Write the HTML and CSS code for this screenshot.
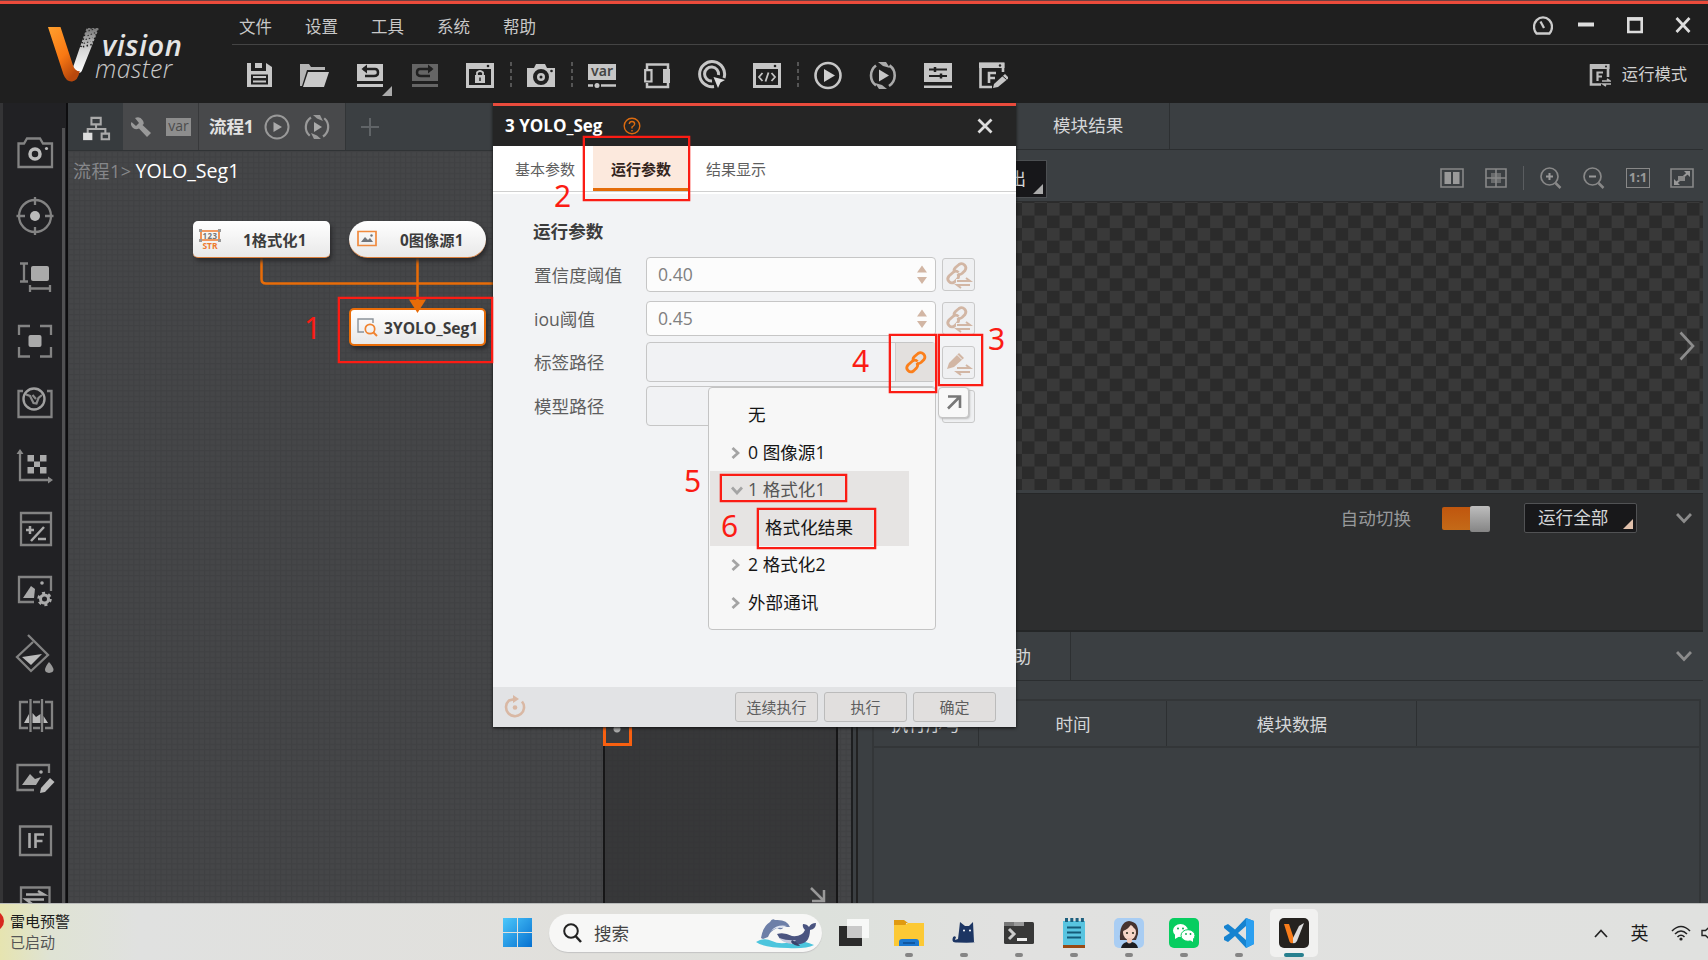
FILE: index.html
```html
<!DOCTYPE html>
<html lang="zh-CN">
<head>
<meta charset="utf-8">
<title>VisionMaster</title>
<link rel="stylesheet" href="styles.css">
</head>
<body>
<div class="screen">
<header class="top">
  <div class="brand">
    <svg class="brand-mark" viewBox="0 0 56 58">
      <defs>
        <linearGradient id="vo" x1="0" y1="0" x2="0.6" y2="1"><stop offset="0" stop-color="#ffa02e"/><stop offset="0.6" stop-color="#f97813"/><stop offset="1" stop-color="#b8480c"/></linearGradient>
        <linearGradient id="vg" x1="0" y1="0" x2="0" y2="1"><stop offset="0" stop-color="#777"/><stop offset="0.5" stop-color="#d8d8d8"/><stop offset="1" stop-color="#fff"/></linearGradient>
      </defs>
      <path d="M41 2 L54 2 L36 47 Q33 51 28 47 Q26 44 28 40Z" fill="url(#vg)"/>
      <path d="M41 2H54L47 19L35 22Z" fill="none" stroke="#1f1f1f" stroke-width="1.8" stroke-dasharray="1.5 2.5"/>
      <path d="M43 5L49 3M42 10L50 7M40 14L47 12M38 18L45 16" stroke="#333" stroke-width="1.2" stroke-dasharray="1.5 2"/>
      <path d="M1 1 H14 L27 41 Q29 47 34 47 Q32 57 26 57.500 Q20 58 17 50Z" fill="url(#vo)"/>
    </svg>
    <div class="brand-text"><b>vision</b><span>master</span></div>
  </div>
  <div class="top-main">
    <div class="menu-row">
      <nav class="menu"><span>文件</span><span>设置</span><span>工具</span><span>系统</span><span>帮助</span></nav>
      <div class="win-controls">
        <svg width="20" height="20" viewBox="0 0 20 20"><path d="M3.500 18.500A9 9.500 0 1 1 16.500 18.500Z" fill="none" stroke="#ccc" stroke-width="2.300"/><path d="M7.500 6.500L11 13" stroke="#ccc" stroke-width="2.300"/></svg>
        <svg width="16" height="20" viewBox="0 0 16 20"><path d="M0 9.500H16" stroke="#ddd" stroke-width="4"/></svg>
        <svg width="16" height="20" viewBox="0 0 16 20"><path d="M1.300 3.500H14.700V17H1.300Z" fill="none" stroke="#ddd" stroke-width="2.600"/><path d="M0 4H16" stroke="#ddd" stroke-width="3.500"/></svg>
        <svg width="16" height="20" viewBox="0 0 16 20"><path d="M1.500 3L14.500 17M14.500 3L1.500 17" stroke="#ddd" stroke-width="2.700"/></svg>
      </div>
    </div>
    <div class="tool-row">
      <div class="tools">
        <i><svg viewBox="0 0 30 30"><path d="M2 3H6V11H21V3L27 7V27H2Z" fill="#c6c6c6"/><path d="M10 3H17V8H10Z" fill="#c6c6c6"/><path d="M6 14.500H23V24.500H6Z" fill="#202020"/><path d="M8 17H21M8 21.500H21" stroke="#c6c6c6" stroke-width="2"/></svg></i>
        <i><svg viewBox="0 0 30 30"><path d="M0 4H9L11 7H25V10H7L2 26H0Z" fill="#b4b4b4"/><path d="M8 12H29L24 27H3Z" fill="#c9c9c9"/></svg></i>
        <i class="has-corner"><svg viewBox="0 0 30 30"><path d="M2 4H28V21H2Z M2 24H28V27H2Z" fill="#c6c6c6"/><path d="M8 9H20Q23 9 23 12.500T19 16H10" fill="none" stroke="#202020" stroke-width="2.500"/><path d="M12 4.500L6.500 9L12 13.500Z" fill="#202020"/></svg></i>
        <i><svg viewBox="0 0 30 30"><path d="M2 4H28V21H2Z M2 24H28V27H2Z" fill="#656565"/><path d="M22 9H10Q7 9 7 12.500T11 16H20" fill="none" stroke="#202020" stroke-width="2.500"/><path d="M18 4.500L23.500 9L18 13.500Z" fill="#202020"/></svg></i>
        <i><svg viewBox="0 0 30 30"><path d="M1 3H29V28H1Z" fill="#c6c6c6"/><path d="M4 9H26V25H4Z" fill="#202020"/><circle cx="23" cy="6" r="1.300" fill="#202020"/><path d="M10 15H20V23H10Z" fill="#c6c6c6"/><path d="M12 15V12.500Q15 9.500 18 12.500V15" fill="none" stroke="#c6c6c6" stroke-width="1.800"/><path d="M15 17.500V21" stroke="#202020" stroke-width="1.500"/></svg></i>
        <b class="dash"></b>
        <i><svg viewBox="0 0 30 30"><path d="M1 8H8L10 4H19L21 8H29V27H1Z" fill="#c6c6c6"/><circle cx="15" cy="17" r="6" fill="none" stroke="#202020" stroke-width="4"/><circle cx="15" cy="17" r="1.500" fill="#202020"/><circle cx="25.500" cy="11" r="1.300" fill="#202020"/></svg></i>
        <b class="dash"></b>
        <i><svg viewBox="0 0 30 30"><path d="M1 4H29V20H1Z" fill="#c6c6c6"/><path d="M1 25.500H6M14 25.500H29" stroke="#c6c6c6" stroke-width="2.500"/><circle cx="10" cy="25.500" r="2.500" fill="#c6c6c6"/><text x="15" y="16" text-anchor="middle" class="var-t">var</text></svg></i>
        <i><svg viewBox="0 0 30 30"><path d="M5 9V4.500H26V9M5 23V27H26V23" fill="none" stroke="#c6c6c6" stroke-width="2.500"/><path d="M3.200 10.200H9.500V21.500H3.200Z" fill="none" stroke="#c6c6c6" stroke-width="2.200"/><path d="M21 9H28V23H21Z" fill="#c6c6c6"/></svg></i>
        <i><svg viewBox="0 0 30 30"><path d="M17 26.500A12.500 12.500 0 1 1 27 18" fill="none" stroke="#c6c6c6" stroke-width="3"/><path d="M15 21A7 7 0 1 1 21.500 15" fill="none" stroke="#c6c6c6" stroke-width="3"/><path d="M16.500 17L28 20L23.500 22.500L21 28Z" fill="#ddd"/></svg></i>
        <i><svg viewBox="0 0 30 30"><path d="M1 3H29V28H1Z" fill="#c6c6c6"/><path d="M4 9H26V25H4Z" fill="#202020"/><circle cx="23" cy="6" r="1.300" fill="#202020"/><path d="M10.500 13L7 17L10.500 21M19.500 13L23 17L19.500 21M16.500 12.500L13.500 21.500" fill="none" stroke="#c6c6c6" stroke-width="1.800"/></svg></i>
        <b class="dash"></b>
        <i><svg viewBox="0 0 30 30"><circle cx="15" cy="15.500" r="12.500" fill="none" stroke="#c6c6c6" stroke-width="2.600"/><path d="M11 9L22 15.500L11 22Z" fill="#d0d0d0"/></svg></i>
        <i><svg viewBox="0 0 30 30"><path d="M8 5.500A12.500 12.500 0 0 0 8 25.500M21 26A12.500 12.500 0 0 0 21 5" fill="none" stroke="#aaa" stroke-width="2.600" stroke-dasharray="24 3 20"/><path d="M10 2H18L22 8L15 6Z M19 29H11L7 23L14 25Z" fill="#aaa"/><path d="M11 9.500L21 15.500L11 21.500Z" fill="#c6c6c6"/></svg></i>
        <i><svg viewBox="0 0 30 30"><path d="M1 3H29V22H1Z M1 25.500H29V28H1Z" fill="#c6c6c6"/><path d="M6 9.500H24M6 16H24" stroke="#202020" stroke-width="2"/><path d="M12 7V12M18 13.500V18.500" stroke="#202020" stroke-width="2.500"/></svg></i>
        <i><svg viewBox="0 0 30 30"><path d="M25 12V4H2.500V27H14" fill="none" stroke="#c6c6c6" stroke-width="2.600"/><path d="M1 2.500H26.500V8H1Z" fill="#c6c6c6"/><circle cx="22" cy="5.500" r="1.200" fill="#202020"/><path d="M11 23V13H18M11 18H17" fill="none" stroke="#c6c6c6" stroke-width="2.600"/><path d="M15 28L16 24L27 14L31 18L20 27Z" fill="#c6c6c6"/><path d="M24 15.500L28.500 19.500" stroke="#202020"/></svg></i>
      </div>
      <div class="run-mode">
        <svg width="22" height="24" viewBox="0 0 22 24"><path d="M19 14V2.500H2V21.500H12" fill="none" stroke="#bbb" stroke-width="2.600"/><path d="M1 1H20.500V6H1Z" fill="#bbb"/><circle cx="17" cy="3.500" r="1" fill="#222"/><path d="M8.500 18V9.500H14M8.500 13.500H13" fill="none" stroke="#bbb" stroke-width="2.200"/><path d="M13 18H21L18 16M22 21H14L17 23" fill="none" stroke="#bbb" stroke-width="1.600"/></svg>
        <span>运行模式</span>
      </div>
    </div>
  </div>
</header>

<main class="work">
  <aside class="side">
    <i><svg viewBox="0 0 40 40"><path d="M3.500 10.500H9L12 5.500H25L28 10.500H37V34H3.500Z" class="ln"/><circle cx="20" cy="21" r="5" fill="none" stroke="#bbb" stroke-width="3.500"/><circle cx="31.500" cy="15.500" r="1.600" fill="#bbb"/></svg></i>
    <i><svg viewBox="0 0 40 40"><circle cx="20" cy="20" r="16" class="ln"/><path d="M20 1V9M20 31V39M1.500 20H10M30 20H38.500" class="ln"/><circle cx="20" cy="20" r="5" fill="#bbb"/></svg></i>
    <i><svg viewBox="0 0 40 40"><path d="M5 5.500H13M9 5.500V23M5 23.500H13M15 27V34M35 27V34M15 30.500H35" class="ln"/><rect x="16" y="8" width="18" height="15" rx="2" fill="#aaa"/></svg></i>
    <i><svg viewBox="0 0 40 40"><path d="M4 14V5H15M25 5H36V14M36 26V35.500H25M15 35.500H4V26" class="ln"/><rect x="13.500" y="14" width="13" height="12" rx="2" fill="#aaa"/></svg></i>
    <i><svg viewBox="0 0 40 40"><path d="M8 8H3.500V34H36.500V8H32" class="ln"/><circle cx="19" cy="16" r="10.500" fill="#212124" stroke="#a0a0a0" stroke-width="2.400"/><path d="M11 11.500L15 13L18.500 20L21.500 20.500L23.500 15L27 12M17.500 12L21 16" fill="none" stroke="#8a8a8a" stroke-width="2.200"/></svg></i>
    <i><svg viewBox="0 0 40 40"><path d="M5 7V34H34" class="ln"/><path d="M1.500 8L5 3L8.500 8Z M33 30.500L38 34L33 37.500Z" fill="#888"/><path d="M12.500 9H19V15.500H25V9H31.500V15.500H25V21H31.500V27.500H25V21H19V27.500H12.500V21H19V15.500H12.500Z" fill="#aaa"/></svg></i>
    <i><svg viewBox="0 0 40 40"><path d="M6 4H36V36H6ZM6 13H36" class="ln"/><path d="M11 21H19M15 17V25M16 32L29 18M23 30H31" stroke="#aaa" stroke-width="2.500"/></svg></i>
    <i><svg viewBox="0 0 40 40"><path d="M36 20V6H4V31H19" class="ln"/><path d="M8 27L16 15L20 18L19 27Z" fill="#aaa"/><circle cx="27" cy="12" r="1.800" fill="#aaa"/><circle cx="29.500" cy="28" r="4" fill="none" stroke="#aaa" stroke-width="3"/><circle cx="29.500" cy="28" r="6" fill="none" stroke="#aaa" stroke-width="2.500" stroke-dasharray="3 3.280"/></svg></i>
    <i><svg viewBox="0 0 40 40"><path d="M13 1L33 21L16 37L2 23L18 8" class="ln"/><path d="M7 23L27 20L16 31Z" fill="#bbb"/><path d="M34 28Q43 38 34 39Q26 38 34 28Z" fill="#999"/></svg></i>
    <i><svg viewBox="0 0 40 40"><path d="M13 6H5V32H13M18 6H25M18 32H25M30 6H37V32H30M15.500 3V36M27 3V36" class="ln"/><path d="M9 27L14 18V27ZM17.500 27V17L21 21L25.500 18V27ZM28.500 27V20L33 27Z" fill="#bbb"/></svg></i>
    <i><svg viewBox="0 0 40 40"><path d="M34 14V6H2.500V31H19" class="ln"/><path d="M7 26L15 15L20 20L26 18L21 26Z" fill="#aaa"/><circle cx="26" cy="13" r="1.800" fill="#aaa"/><path d="M25 34L26 29L35 19L39.500 23L30 33Z" fill="#bbb"/></svg></i>
    <i><svg viewBox="0 0 40 40"><path d="M5 5.500H36V34H5Z" class="ln"/><path d="M14.500 12V27M20.500 27V13.500H29M20.500 20H27.500" fill="none" stroke="#aaa" stroke-width="2.600"/></svg></i>
    <i><svg viewBox="0 0 40 40"><path d="M6 3.500H34.500V35H6Z" class="ln"/><path d="M11 10.500H29L23 7M29 15.500H11L17 20" fill="none" stroke="#aaa" stroke-width="2.500"/></svg></i>
    <div class="side-scroll"></div>
  </aside>

  <section class="flow">
    <div class="flow-tabs">
      <div class="ft-tree"><svg width="28" height="26" viewBox="0 0 30 28"><path d="M9 2H19V9H9ZM20 19H28V25H20ZM14 9V14M5 19V14H24V19" fill="none" stroke="#aaa" stroke-width="2.200"/><path d="M0 18H10V26H0Z" fill="#ddd"/></svg></div>
      <div class="ft-tools">
        <svg width="22" height="22" viewBox="0 0 22 22"><path d="M1.500 6L6 10L9 7L5 2Q10 0 12.500 4T12.500 9L21 17L17 21L9 12.500Q5 14.500 2.500 11.500T1.500 6Z" fill="#999"/></svg>
        <span class="var-badge">var</span>
      </div>
      <div class="ft-flow"><b>流程1</b>
        <svg width="26" height="26" viewBox="0 0 26 26"><circle cx="13" cy="13" r="11.500" fill="none" stroke="#999" stroke-width="2"/><path d="M9.500 8L18 13L9.500 18Z" fill="#aaa"/></svg>
        <svg width="26" height="26" viewBox="0 0 26 26"><path d="M7 3.500A11.500 11.500 0 0 0 6 22M19 22.500A11.500 11.500 0 0 0 20 4" fill="none" stroke="#999" stroke-width="2.200" stroke-dasharray="21 2 20"/><path d="M9 1H16L19 7L13 4.500ZM17 25H10L7 19L13 21.500Z" fill="#999"/><path d="M10 8L18 13L10 18Z" fill="#aaa"/></svg>
      </div>
      <div class="ft-add"><svg width="20" height="20" viewBox="0 0 20 20"><path d="M10 1V19M1 10H19" stroke="#606467" stroke-width="2"/></svg></div>
    </div>
    <div class="canvas">
      <div class="crumb"><span>流程1&gt;</span>YOLO_Seg1</div>
      <svg class="wires" viewBox="0 0 790 752"><path d="M193.500 106V128Q193.500 132.500 198 132.500H430M349.500 106V150" fill="none" stroke="#e86c08" stroke-width="2.500"/></svg>
      <div class="node n-fmt"><svg width="22" height="22" viewBox="0 0 22 22"><path d="M2 3H20V12H2Z" fill="none" stroke="#ee7b30" stroke-width="1.600"/><text x="11" y="10.500" text-anchor="middle" class="n123">123</text><text x="11" y="20.500" text-anchor="middle" class="nstr">STR</text><path d="M0 1H3V4H0ZM19 1H22V4H19ZM0 11H3V14H0ZM19 11H22V14H19Z" fill="#999"/></svg><b>1格式化1</b></div>
      <div class="node n-img"><svg width="20" height="18" viewBox="0 0 20 18"><path d="M1 1.500H19V15.500H1Z" fill="none" stroke="#f08a3e" stroke-width="1.700"/><path d="M4 12L8 7L11 10L13 8L16 12Z" fill="#6f757c"/><circle cx="14.500" cy="5.500" r="1.200" fill="#6f757c"/></svg><b>0图像源1</b></div>
      <div class="node n-yolo"><svg width="21" height="19" viewBox="0 0 21 19"><path d="M7 14H1V1H16V5" fill="none" stroke="#8b9299" stroke-width="1.400"/><circle cx="13" cy="11" r="4.700" fill="none" stroke="#f0832f" stroke-width="1.700"/><path d="M16 14L20 18" stroke="#f0832f" stroke-width="2"/></svg><b>3YOLO_Seg1</b></div>
      <svg class="wires" viewBox="0 0 790 752"><path d="M341 148.500H358L349.500 162Z" fill="#e86c08"/></svg>
      <div class="mini-map"><div class="mini-view"></div><svg width="16" height="16" viewBox="0 0 16 16"><path d="M1 1L13 13M14 3V14H2" fill="none" stroke="#999" stroke-width="2.500"/></svg></div>
      <div class="gutter"></div>
    </div>
  </section>

  <section class="result">
    <div class="res-tabs"><div class="res-tab">模块结果</div></div>
    <div class="res-tools">
      <div class="out-select">输出<em></em></div>
      <div class="view-icons">
        <svg width="24" height="20" viewBox="0 0 24 20"><path d="M1 1H23V19H1Z" fill="none" stroke="#888" stroke-width="1.600"/><path d="M4.500 4H11V16H4.500ZM13 4H19.500V16H13Z" fill="#999"/></svg>
        <svg width="22" height="20" viewBox="0 0 22 20"><path d="M1 1H21V19H1ZM11 1V19M1 10H21" fill="none" stroke="#888" stroke-width="1.600"/><path d="M6 5H16V15H6Z" fill="#888" opacity=".6"/></svg>
        <span class="sep"></span>
        <svg width="22" height="22" viewBox="0 0 22 22"><circle cx="9.500" cy="9.500" r="8.500" fill="none" stroke="#888" stroke-width="1.700"/><path d="M15.500 16L20.500 21" stroke="#888" stroke-width="2.500"/><path d="M6 9.500H13M9.500 6V13" stroke="#999" stroke-width="2"/></svg>
        <svg width="22" height="22" viewBox="0 0 22 22"><circle cx="9.500" cy="9.500" r="8.500" fill="none" stroke="#888" stroke-width="1.700"/><path d="M15.500 16L20.500 21" stroke="#888" stroke-width="2.500"/><path d="M6 9.500H13" stroke="#999" stroke-width="2"/></svg>
        <span class="one">1:1</span>
        <svg width="24" height="20" viewBox="0 0 24 20"><path d="M1 1H23V19H1Z" fill="none" stroke="#888" stroke-width="1.600"/><path d="M5 16L19 4" stroke="#999" stroke-width="2"/><path d="M14 3H20V9ZM4 11V17H10Z" fill="#999"/><path d="M8 8H15V13H8Z" fill="#888"/></svg>
      </div>
    </div>
    <div class="stage"><svg width="16" height="30" viewBox="0 0 16 30"><path d="M1.500 1.500L14 15L1.500 28.500" fill="none" stroke="#8c8c8c" stroke-width="2.600"/></svg></div>
    <div class="switch-pane">
      <span>自动切换</span>
      <div class="toggle"><i></i></div>
      <div class="run-select">运行全部<em></em></div>
      <svg width="16" height="12" viewBox="0 0 16 12"><path d="M1 2L8 9.500L15 2" fill="none" stroke="#8c8c8c" stroke-width="2.800"/></svg>
    </div>
    <div class="help-tabs"><div class="help-tab">帮助</div><svg width="16" height="12" viewBox="0 0 16 12"><path d="M1 2L8 9.500L15 2" fill="none" stroke="#8c8c8c" stroke-width="2.800"/></svg></div>
    <div class="table">
      <div class="thead"><span>执行序号</span><span>时间</span><span>模块数据</span><span></span></div>
      <div class="tbody"></div>
    </div>
  </section>
</main>

<div class="dialog">
  <div class="dlg-title"><b>3 YOLO_Seg</b>
    <svg width="18" height="18" viewBox="0 0 18 18"><circle cx="9" cy="9" r="7.800" fill="none" stroke="#dc6b10" stroke-width="1.400"/><path d="M6.300 7Q6.500 4.500 9 4.500T11.700 7Q11.500 8.500 9 10V11.500M9 13V14.500" fill="none" stroke="#dc6b10" stroke-width="1.400"/></svg>
    <svg class="dlg-x" width="16" height="16" viewBox="0 0 16 16"><path d="M1.500 1.500L14.500 14.500M14.500 1.500L1.500 14.500" stroke="#ddd" stroke-width="2.800"/></svg></div>
  <div class="dlg-tabs"><span>基本参数</span><span class="on">运行参数</span><span>结果显示</span></div>
  <div class="dlg-body">
    <h3>运行参数</h3>
    <div class="row"><label>置信度阈值</label><div class="field"><span>0.40</span><svg width="10" height="20" viewBox="0 0 10 20"><path d="M0 7.500L5 0.500L10 7.500ZM0 12L5 19L10 12Z" fill="#d2b6a4"/></svg></div><div class="btn"><svg width="26" height="26" viewBox="0 0 26 26"><use href="#lnk" stroke="#d2b6a4"/><path d="M11 18H26V26H11Z" fill="#eff0f2"/><path d="M12 20H25L21 17M25 24H12L16 27" fill="none" stroke="#d2b6a4" stroke-width="2"/></svg></div></div>
    <div class="row"><label>iou阈值</label><div class="field"><span>0.45</span><svg width="10" height="20" viewBox="0 0 10 20"><path d="M0 7.500L5 0.500L10 7.500ZM0 12L5 19L10 12Z" fill="#d2b6a4"/></svg></div><div class="btn"><svg width="26" height="26" viewBox="0 0 26 26"><use href="#lnk" stroke="#d2b6a4"/><path d="M11 18H26V26H11Z" fill="#eff0f2"/><path d="M12 20H25L21 17M25 24H12L16 27" fill="none" stroke="#d2b6a4" stroke-width="2"/></svg></div></div>
    <div class="row tall"><label>标签路径</label><div class="field off"><div class="link-on"><svg width="24" height="24" viewBox="0 0 24 24"><use href="#lnk" stroke="#fb7f1b"/></svg></div></div><div class="btn"><svg width="26" height="26" viewBox="0 0 26 26"><path d="M2 20L4 14L14 4L19 9L9 18Z" fill="#d2b6a4"/><path d="M12 5.500L17 10.500" stroke="#f2f3f5"/><path d="M11 17H26V25H11Z" fill="#eff0f2"/><path d="M12 19H25L21 16M25 23H12L16 26" fill="none" stroke="#d2b6a4" stroke-width="2"/></svg></div></div>
    <div class="row tall"><label>模型路径</label><div class="field off"></div><div class="btn"><div class="pop"><svg width="16" height="16" viewBox="0 0 16 16"><path d="M2 2.500H14V14M13.500 3L2 14.500" fill="none" stroke="#777" stroke-width="2.600"/></svg></div></div></div>
  </div>
  <div class="dlg-foot">
    <svg width="24" height="24" viewBox="0 0 24 24"><path d="M19 6.500A9 9 0 1 1 6 5.500L12 4" fill="none" stroke="#d9b8a4" stroke-width="2.600"/><path d="M10 0L16 4L10 8Z" fill="#d9b8a4"/><circle cx="12" cy="12.500" r="2.300" fill="#d9b8a4"/></svg>
    <span class="fb">连续执行</span><span class="fb">执行</span><span class="fb">确定</span>
  </div>
  <div class="drop">
    <div class="it none">无</div>
    <div class="it"><svg width="9" height="12" viewBox="0 0 9 12"><path d="M1.500 1L7 6L1.500 11" class="ch"/></svg>0 图像源1</div>
    <div class="sel"><div class="it dim"><svg width="12" height="9" viewBox="0 0 12 9"><path d="M1 1.500L6 7L11 1.500" class="ch"/></svg>1 格式化1</div>
    <div class="it sub">格式化结果</div></div>
    <div class="it"><svg width="9" height="12" viewBox="0 0 9 12"><path d="M1.500 1L7 6L1.500 11" class="ch"/></svg>2 格式化2</div>
    <div class="it"><svg width="9" height="12" viewBox="0 0 9 12"><path d="M1.500 1L7 6L1.500 11" class="ch"/></svg>外部通讯</div>
  </div>
</div>
<svg width="0" height="0" class="defs"><g id="lnk" fill="none" stroke-width="2.800"><path d="M10 11Q8 9 10.500 6.500L14 3.500Q17 1.500 19.500 4T20 9.500L17 12.500Q14.500 14.500 12.500 13"/><path d="M13.500 11.500Q11.500 9 8.500 11L4 15Q1.500 18 4 20.500T9.500 21L12.500 18Q14.500 15.500 13 13"/></g></svg>

<div class="marks">
  <div class="box b1"></div><div class="box b2"></div><div class="box b3"></div><div class="box b4"></div><div class="box b5"></div><div class="box b6"></div>
  <span class="num m1">1</span><span class="num m2">2</span><span class="num m3">3</span><span class="num m4">4</span><span class="num m5">5</span><span class="num m6">6</span>
</div>

<footer class="taskbar">
  <div class="weather"><em></em><div><p>雷电预警</p><p>已启动</p></div></div>
  <div class="apps">
    <svg class="win" width="29" height="29" viewBox="0 0 29 29"><defs><linearGradient id="wg" x1="0" y1="0" x2="1" y2="1"><stop offset="0" stop-color="#4cc8fb"/><stop offset="1" stop-color="#0670d0"/></linearGradient></defs><path d="M0 0H14V14H0ZM15 0H29V14H15ZM0 15H14V29H0ZM15 15H29V29H15Z" fill="url(#wg)"/></svg>
    <div class="search">
      <svg width="19" height="20" viewBox="0 0 19 20"><circle cx="8" cy="8" r="6.800" fill="none" stroke="#222" stroke-width="2"/><path d="M12.500 13L18 19" stroke="#222" stroke-width="2.500"/></svg>
      <span>搜索</span>
      <svg class="whale" width="60" height="31" viewBox="0 0 60 31"><path d="M0 24Q8 19 16 23T34 24T58 27Q50 31 32 30Q8 30 0 24Z" fill="#4cc5dd"/><path d="M5 20Q7 8 14 4Q16 0 19 2Q31 1 34 9L27 9Q27 12 23 11L21 10Q14 13 12 19L7 21Z" fill="#6d7fa8"/><path d="M15 13Q21 6 31 8L26 10Q20 9 15 13Z" fill="#dfe5f2"/><path d="M21 16Q28 14 36 18Q46 19 49 12Q46 9 47 6Q51 6 53 9Q55 5 60 5Q60 11 54 12Q54 28 38 26Q24 24 21 16Z" fill="#4a5480"/><path d="M23 20Q32 23 40 22L36 26Q27 25 23 20Z" fill="#c5cade"/><path d="M36 22Q42 25 44 28Q38 28 35 24Z" fill="#39426b"/></svg>
    </div>
    <i class="app"><svg viewBox="0 0 30 30"><path d="M0 8H23V28H0Z" fill="#2b2b2b"/><path d="M8 1H30V20H8Z" fill="#fff" opacity=".75"/></svg></i>
    <i class="app run"><svg viewBox="0 0 30 30"><path d="M0 2H10L14 5H12V9H0Z" fill="#e09a10"/><path d="M0 7L11 7L14 5H30V28H0Z" fill="#fcc935"/><path d="M5 28V24Q5 21 8 21H22Q25 21 25 24V28Z" fill="#1b78d0"/><path d="M9 25H21" stroke="#0d4c92" stroke-width="1.500"/></svg></i>
    <i class="app run"><svg viewBox="0 0 30 30"><path d="M10 13L11 4L16 8H20L24 4L25 24H26V24Q25 25 8 24.500Q3 25 3.500 21T7 19L6 22L9 21Z" fill="#1c3563"/><circle cx="15" cy="12.500" r="1" fill="#fff"/><circle cx="21" cy="12.500" r="1" fill="#fff"/></svg></i>
    <i class="app run"><svg viewBox="0 0 30 30"><rect x="0" y="4" width="30" height="22" rx="1.500" fill="#383838"/><path d="M0 8V5Q0 4 1 4H10V8Z" fill="#777"/><path d="M10 4H20V8H10Z" fill="#999"/><path d="M5 11L10 16L5 21" fill="none" stroke="#ccc" stroke-width="3"/><path d="M13 21.500H23" stroke="#eee" stroke-width="3"/></svg></i>
    <i class="app run"><svg viewBox="0 0 30 30"><path d="M4 3H26V27H4Z" fill="#58c4e0"/><path d="M4 27H26V30H4Z" fill="#9a4a14"/><path d="M8 9.500H22M8 14.500H22M8 19.500H22" stroke="#155a78" stroke-width="1.800"/><path d="M6 2H26" stroke="#1d5f7e" stroke-width="4" stroke-dasharray="3 2.300"/></svg></i>
    <i class="app run"><svg viewBox="0 0 30 30"><rect width="30" height="30" rx="5" fill="#a9cdf3"/><path d="M6 22Q5 4 15 3Q25 4 24 16L22 22Z" fill="#46332f"/><ellipse cx="15.500" cy="14.500" rx="6.500" ry="7.500" fill="#f6d6c8"/><path d="M9 13Q15 11 17 6Q19 10 23 12L22 6L14 4L9 7Z" fill="#46332f"/><path d="M13 20H18V25H13Z" fill="#f0c8b8"/><path d="M7 30Q8 25 13 24Q15 27 18 24Q23 25 24 30Z" fill="#1d1d20"/><circle cx="13" cy="15" r="1.100" fill="#332"/><circle cx="19" cy="15" r="1.100" fill="#332"/></svg></i>
    <i class="app run"><svg viewBox="0 0 30 30"><rect width="30" height="30" rx="5" fill="#07cd60"/><ellipse cx="11.500" cy="12.500" rx="7.500" ry="6.500" fill="#fff"/><path d="M6 16L6 21L11 18Z" fill="#fff"/><ellipse cx="19" cy="17.500" rx="7" ry="5.800" fill="#fff" stroke="#07cd60"/><path d="M21 22L24 24L24 20Z" fill="#fff"/><circle cx="9" cy="10.500" r="1" fill="#07a850"/><circle cx="14" cy="10.500" r="1" fill="#07a850"/><circle cx="17" cy="16" r=".9" fill="#07a850"/><circle cx="21.500" cy="16" r=".9" fill="#07a850"/></svg></i>
    <i class="app run"><svg viewBox="0 0 30 30"><path d="M22 0L30 3V26L22 30L11 18L4 24L0 22V19L6 15L0 10V8L4 6L11 11.500Z M22 8L14 15L22 22Z" fill="#1683d0" fill-rule="evenodd"/><path d="M22 0L30 3V26L22 30Z" fill="#2b9ff0"/></svg></i>
    <i class="app active"><svg viewBox="0 0 30 30"><rect width="30" height="30" rx="5" fill="#25221f"/><path d="M5 6H10L15 21L14 25Q11 26 10 22Z" fill="#f97d1b"/><path d="M20 8L25 5L18 23Q16 26 14 25L14 20Z" fill="#ddd"/></svg></i>
  </div>
  <div class="tray">
    <svg width="14" height="9" viewBox="0 0 14 9"><path d="M1 8L7 1.500L13 8" fill="none" stroke="#222" stroke-width="1.700"/></svg>
    <span>英</span>
    <svg width="20" height="16" viewBox="0 0 20 16"><path d="M1 6Q10 -3 19 6M4 9Q10 3 16 9M6.500 12Q10 8.500 13.500 12" fill="none" stroke="#222" stroke-width="1.600"/><circle cx="10" cy="14" r="1.600" fill="#222"/></svg>
    <svg width="18" height="16" viewBox="0 0 18 16"><path d="M1 5.500H4.500L9 1.500V14.500L4.500 10.500H1Z" fill="none" stroke="#222" stroke-width="1.400"/></svg>
  </div>
</footer>
</div>
</body>
</html>
```

FILE: styles.css
```css
* { box-sizing: border-box; }
body, p, h3 { margin: 0; }
body { background: #202020; }
i, em { font-style: normal; display: block; }
svg { display: block; flex: none; }
.screen {
  position: relative; width: 1708px; height: 960px; overflow: hidden;
  display: flex; flex-direction: column;
  font-family: "Open Sans", "Noto Sans CJK SC", sans-serif;
  font-size: 17.6px; line-height: 1; color: #ddd; white-space: nowrap;
}
.defs { position: absolute; }

/* header */
.top { height: 103px; flex: none; display: flex; padding-top: 4px; background: linear-gradient(#6d4040 0 1px, #ec4b3b 1px 4px, #1f1f1f 4px); }
.brand { width: 232px; flex: none; display: flex; padding: 22px 0 0 47px; }
.brand-mark { width: 54px; height: 56px; }
.brand-text { font-style: italic; display: flex; flex-direction: column; margin-left: -6px; }
.brand-text b { font-size: 29px; line-height: 22px; font-weight: 600; padding: 8px 0 0 7px; color: #e4e4e4; letter-spacing: .6px; }
.brand-text span { font-size: 25px; line-height: 24px; color: #c8c8c8; font-weight: 300; letter-spacing: .3px; }
.top-main { flex: 1; display: flex; flex-direction: column; }
.menu-row { height: 41px; border-bottom: 1px solid #444; display: flex; justify-content: space-between; align-items: center; padding: 3px 17px 0 7px; }
.menu { display: flex; gap: 33px; font-size: 16.5px; color: #c8c8c8; padding-top: 3px; }
.win-controls { display: flex; gap: 32.500px; padding-bottom: 2px; align-items: center; }
.win-controls svg:first-child { margin-right: -7px; }
.tool-row { height: 57px; display: flex; justify-content: space-between; align-items: center; padding: 2px 21px 0 0; }
.tools { display: flex; align-items: center; }
.tools i { width: 55px; display: flex; justify-content: center; }
.tools i svg { width: 30px; height: 30px; }
.has-corner { position: relative; }
.has-corner::after { content: ""; position: absolute; right: 5px; bottom: -6px; border: 5px solid; border-color: transparent #aaa #aaa transparent; }
.dash { width: 6px; height: 25px; background: repeating-linear-gradient(#555 0 4px, transparent 4px 7px) 3px 0 / 2px 100% no-repeat; }
.var-t { font: 600 14px "Noto Sans"; fill: #444; }
.run-mode { display: flex; align-items: center; gap: 11px; font-size: 16.3px; color: #d0d0d0; }

/* work area */
.work { height: 800px; flex: none; display: flex; }
.side { width: 68px; flex: none; background: #212124; border-left: 3px solid #343436; border-right: 2px solid #0d0d0f; padding: 19px 10px 0 12px; position: relative; overflow: hidden; }
.side i { height: 62.550px; display: flex; align-items: center; }
.side i svg { width: 40px; height: 40px; }
.ln { fill: none; stroke: #838383; stroke-width: 2.300; }
.side-scroll { position: absolute; left: 59px; top: 25px; width: 3px; bottom: 0; background: #505052; }

.flow { width: 790px; flex: none; display: flex; flex-direction: column; overflow: hidden; }
.flow-tabs { height: 48px; flex: none; display: flex; background: #3b3f42; border-bottom: 1px solid #303335; }
.flow-tabs > div { display: flex; align-items: center; }
.ft-tree { width: 55px; background: #373b3e; padding: 5px 0 0 15px; }
.ft-tools { width: 76px; background: #48494b; border-right: 1px solid #38393b; padding-left: 7px; gap: 14px; }
.var-badge { width: 25px; height: 18px; background: #8d8d8d; color: #4c4c4c; font-size: 14px; line-height: 15px; text-align: center; }
.ft-flow { width: 147px; background: #48494b; border-right: 1px solid #323537; padding-left: 10px; gap: 14px; }
.ft-flow b { font-size: 17.600px; width: 42px; letter-spacing: -.2px; color: #e2e2e2; padding-top: 1px; }
.ft-add { padding-left: 14px; }
.ft-flow b + svg { margin-left: -1px; }
.canvas {
  position: relative; flex: 1; background-color: #454648;
  background-image: linear-gradient(#404143 1px, transparent 1.500px), linear-gradient(90deg, #404143 1px, transparent 1.500px);
  background-size: 5.450px 5.450px;
}
.crumb { padding: 10px 0 0 5px; font-size: 19.600px; color: #fff; }
.crumb span { color: #86878a; font-size: 18px; letter-spacing: .5px; margin-right: 4px; }
.wires { position: absolute; left: 0; top: 0; width: 790px; height: 752px; }
.node { position: absolute; width: 137px; height: 37px; border-radius: 5px; background: linear-gradient(#fff, #e8e8e8); border-bottom: 1px solid #d97d3a; box-shadow: 2px 3px 4px #2a2a2c; display: flex; align-items: center; color: #3c3c3c; font-size: 15.300px; }
.node b { padding-top: 3px; }
.n-fmt { left: 125px; top: 70px; padding-left: 6px; gap: 22px; }
.n-img { left: 281px; top: 70px; border-radius: 19px; padding-left: 8px; gap: 23px; }
.n-yolo { left: 281px; top: 157px; height: 38px; border: 2.500px solid #e86c08; padding-left: 6px; gap: 6px; font-size: 15.600px; }
.n123 { font: bold 8px "Noto Sans"; fill: #777; letter-spacing: .5px; }
.nstr { font: bold 8.500px "Noto Sans"; fill: #ee7b30; }
.mini-map { position: absolute; left: 535px; top: 560px; width: 235px; height: 192px; border: 2px solid #161617; border-bottom: 0; background: rgba(46, 46, 48, .6); display: flex; align-items: flex-end; justify-content: flex-end; padding: 0 10px 0 0; }
.mini-view { position: absolute; left: -2px; top: 10px; width: 29px; height: 23px; border: 3px solid #f86010; background: radial-gradient(circle at 11px 3px, #aaa 3px, transparent 4px) #3a3b3d; }
.gutter { position: absolute; right: 0; top: 0; width: 7px; height: 752px; background: #3b3f42; border-left: 2px solid #1d1e1f; border-right: 2px solid #222; }

.result { flex: 1; display: flex; flex-direction: column; background: #3b3f42; padding-right: 5px; color: #d4d6d8; }
.res-tabs { height: 47px; flex: none; border-bottom: 1px solid #2b2e30; display: flex; padding-left: 150px; }
.res-tab { width: 162px; border-right: 1px solid #2d3032; padding: 14px 0 0 45px; }
.res-tools { height: 51px; flex: none; display: flex; align-items: center; justify-content: space-between; padding: 6px 9px 2px 108px; }
.out-select { width: 81px; height: 38px; background: #17171a; border: 1px solid #4c4f52; position: relative; padding: 9px 0 0 24px; margin-top: 2px; }
.out-select em, .run-select em { position: absolute; right: 3px; bottom: 3px; border: 5px solid; border-color: transparent #aaa #aaa transparent; }
.view-icons { display: flex; align-items: center; gap: 20px; }
.view-icons svg + svg { margin-left: 1px; }
.view-icons .one { margin-left: 1px; }
.sep { width: 1px; height: 24px; background: #5a5d60; margin: 0 -4px; }
.one { width: 24px; height: 20px; border: 1.500px solid #888; color: #999; font-size: 13px; line-height: 17px; text-align: center; font-weight: bold; }
.stage { height: 289px; flex: none; border-top: 1px solid #2b2c2d; display: flex; justify-content: flex-end; align-items: center; padding-right: 8px;
  background: repeating-conic-gradient(#2b2b2b 0 25%, #393939 0 50%) 13.400px 1px / 25.100px 25.100px; }
.switch-pane { height: 139px; flex: none; margin-top: 3px; background: #2d2e2f; border-bottom: 2px solid #242627; border-top: 1px solid #262728; display: flex; align-items: flex-start; justify-content: flex-end; padding: 9px 11px 0 0; }
.switch-pane > span { color: #97999b; padding-top: 7px; margin-right: 31px; }
.toggle { width: 48px; height: 23px; margin: 4px 34px 0 0; background: linear-gradient(#c0560e, #c46a18); border-radius: 2px; display: flex; justify-content: flex-end; }
.toggle i { width: 20px; height: 26px; margin-top: -1px; border-radius: 2px; background: linear-gradient(#bdbdbd, #858585); }
.run-select { width: 113px; height: 30px; border: 1.500px solid #515254; border-radius: 2px; background: #18181a; position: relative; padding: 5px 0 0 13px; margin-right: 39px; }
.run-select em { border-color: transparent #e0c0ab #e0c0ab transparent; }
.switch-pane > svg { margin: 9px 0 0; }
.help-tabs { height: 49px; flex: none; display: flex; justify-content: space-between; align-items: center; border-bottom: 1px solid #2b2e30; padding-right: 11px; }
.help-tab { width: 213px; height: 100%; border-right: 1px solid #2d3032; padding: 16px 0 0 138px; }
.table { flex: 1; margin: 18px 2px 0 14px; border: 2px solid #333638; border-bottom: 0; }
.thead { display: flex; height: 47px; border-bottom: 2px solid #333638; line-height: 46px; text-align: center; }
.thead span { border-right: 1px solid #2d3032; }
.thead span:nth-child(1) { width: 105px; }
.thead span:nth-child(2) { width: 188px; padding-left: 1px; }
.thead span:nth-child(3) { width: 250px; padding-left: 1px; }
.thead span:nth-child(4) { border: 0; }

/* dialog */
.dialog { position: absolute; left: 493px; top: 103px; width: 523px; height: 624px; background: #f2f3f5; border-top: 3px solid #e94b3c; display: flex; flex-direction: column; color: #5e5e5e; box-shadow: 0 1px 3px #111; }
.dlg-title { height: 40px; flex: none; background: #252525; color: #fff; display: flex; align-items: center; padding: 0 23px 1px 12px; }
.dlg-title b { font-size: 17px; width: 118px; }
.dlg-x { margin-left: auto; }
.dlg-tabs { height: 48px; flex: none; background: #fff; display: flex; font-size: 15px; box-shadow: inset 0 -2px #fff, inset 0 -3px #d0d0d0; }
.dlg-tabs span { height: 45px; line-height: 46px; padding-left: 22px; width: 100px; }
.dlg-tabs .on { width: 96px; padding-left: 18px; background: #fce9dd; border-bottom: 3px solid #e56c08; font-weight: bold; color: #33241c; }
.dlg-tabs span:last-child { padding-left: 17px; }
.dlg-body { flex: 1; padding: 29px 0 0 41px; }
.dlg-body h3 { font-size: 17.600px; color: #3c3c3c; margin-left: -1px; height: 34px; }
.row { display: flex; align-items: center; height: 35px; margin-bottom: 9px; }
.row.tall { height: 40px; margin-bottom: 4px; }
.row:nth-child(4) { margin: -3px 0 4px; }
.row:nth-child(3) { margin-bottom: 9px; }
.row label { width: 112px; padding-top: 2px; }
.field { width: 290px; height: 100%; border: 1.500px solid #c6c6c6; border-radius: 4px; background: #fcfcfc; display: flex; align-items: center; justify-content: space-between; padding: 0 8px 0 11px; color: #808080; margin-right: 6px; }
.field span { padding-top: 1px; }
.field.off { background: #f1f2f4; padding: 0; justify-content: flex-end; }
.link-on { width: 40px; height: 100%; background: #e3e0de; border-left: 1px solid #ccc; display: flex; align-items: center; justify-content: center; }
.btn { width: 33px; height: 33px; border: 1.500px solid #c9c9c9; border-radius: 3px; position: relative; padding: 2px 0 0 2px; background: #eff0f2; }
.btn > svg { overflow: visible; }
.pop { position: absolute; left: -5px; top: -4px; width: 31px; height: 31px; background: #f8f8f8; border: 1.500px solid #c4c4c4; border-radius: 4px; display: flex; align-items: center; justify-content: center; box-shadow: 1px 1px 2px #bbb; }
.dlg-foot { height: 40px; flex: none; background: #e2e3e5; display: flex; align-items: center; padding: 0 20px 0 10px; gap: 6px; font-size: 15px; }
.dlg-foot svg { margin-right: auto; }
.fb { width: 83px; height: 30px; line-height: 28px; text-align: center; border: 1.500px solid #bbb; border-radius: 3px; background: #e1dfde; }
.drop { position: absolute; left: 215px; top: 281px; width: 228px; height: 243px; background: #f7f7f7; border: 1.500px solid #c4c4c4; border-radius: 4px; padding: 8px 26px 0 1px; color: #151515; }
.it { height: 37.500px; display: flex; align-items: center; padding: 1px 0 0 21px; }
.it svg { margin-right: 8px; }
.it.none { padding-left: 38px; }
.sel { background: #e6e4e3; }
.dim { color: #555; }
.dim svg { margin-right: 5px; }
.it.sub { padding-left: 55px; }
.ch { fill: none; stroke: #a4a4a4; stroke-width: 2.800; }

/* numbered callouts */
.marks { position: absolute; inset: 0; color: #fb1c14; }
.box { position: absolute; border: 2px solid #fb1c14; box-shadow: 0 0 .5px .3px #fb1c14; }
.num { position: absolute; font-size: 30px; line-height: 30px; font-family: "Noto Sans"; }
.b1 { left: 338px; top: 297px; width: 155px; height: 66px; }
.b2 { left: 583px; top: 136px; width: 107px; height: 65px; }
.b3 { left: 938px; top: 334px; width: 45px; height: 52px; }
.b4 { left: 889px; top: 334px; width: 48px; height: 59px; }
.b5 { left: 720px; top: 474px; width: 127px; height: 28px; }
.b6 { left: 757px; top: 508px; width: 119px; height: 41px; }
.m1 { left: 304px; top: 313px; }
.m2 { left: 554px; top: 181px; }
.m3 { left: 988px; top: 324px; }
.m4 { left: 852px; top: 346px; }
.m5 { left: 684px; top: 466px; }
.m6 { left: 721px; top: 511px; }

/* taskbar */
.taskbar { height: 57px; flex: none; display: flex; align-items: center; background: linear-gradient(90deg, #e6e4b0 0, #dfe3d4 50px, #e0e1e0 140px, #e1e0dc 600px, #dde1dc 820px, #e1e1e0 1000px, #e0e1df); border-top: 1px solid #b9bbba; color: #1c1c1c; position: relative; }
.weather { width: 503px; flex: none; display: flex; align-items: center; font-size: 15px; }
.weather em { width: 20px; height: 20px; border-radius: 50%; background: #d8281e; margin: -22px 6px 0 -16px; }
.weather p { height: 21px; line-height: 21px; }
.weather p + p { color: #555; }
.apps { display: flex; align-items: center; }
.search { width: 273px; height: 38px; margin: 2px 4px 0 17px; border-radius: 19px; background: #f7f7f6; box-shadow: 0 1px 1px #c4c4c4; display: flex; align-items: center; padding: 0 6px 0 14px; color: #444; }
.search span { margin: 1px auto 0 12px; }
.app { width: 55px; height: 56px; display: flex; align-items: center; justify-content: center; position: relative; }
.app svg { width: 30px; height: 30px; position: relative; margin-top: 2px; }
.run::after, .active::after { content: ""; position: absolute; bottom: 3px; width: 8px; height: 4px; border-radius: 2px; background: #858585; }
.active::before { content: ""; position: absolute; left: 4px; top: 5px; width: 48px; height: 48px; border-radius: 5px; background: #f1f1f0; }
.active::after { width: 20px; background: #28808f; }
.tray { position: absolute; left: 1594px; top: 19px; display: flex; align-items: center; gap: 22.500px; height: 20px; }
.tray span { font-size: 18px; }
.tray svg + svg { margin-left: -13px; }
```
